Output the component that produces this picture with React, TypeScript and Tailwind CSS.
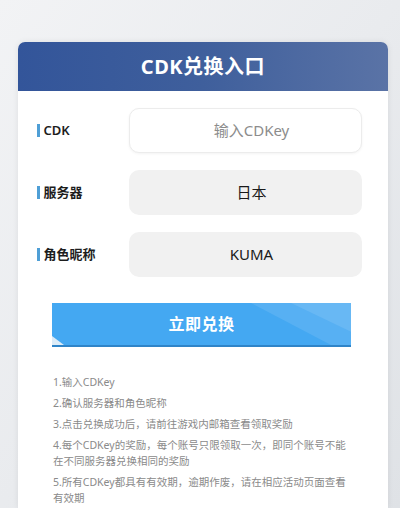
import React from 'react';

const FONT = { fontFamily: '"Noto Sans", "Noto Sans CJK SC", sans-serif' };

const fields = [
  { label: 'CDK', value: '输入CDKey', placeholder: true },
  { label: '服务器', value: '日本' },
  { label: '角色昵称', value: 'KUMA' },
];

const tips = [
  '1.输入CDKey',
  '2.确认服务器和角色昵称',
  '3.点击兑换成功后，请前往游戏内邮箱查看领取奖励',
  '4.每个CDKey的奖励，每个账号只限领取一次，即同个账号不能在不同服务器兑换相同的奖励',
  '5.所有CDKey都具有有效期，逾期作废，请在相应活动页面查看有效期',
];

function Field({ label, value, placeholder }: { label: string; value: string; placeholder?: boolean }) {
  return (
    <div className="flex items-center h-[45px]">
      <div className="w-[92px] flex items-center">
        <span className="w-[2.5px] h-[13px] bg-[#4f9fd6] mr-[4px]" />
        <span className="text-[13px] font-semibold text-[#1d1d1d] leading-none">{label}</span>
      </div>
      <div
        className={
          placeholder
            ? 'flex-1 h-full rounded-[10px] bg-white border border-[#ececec] shadow-[0_1px_3px_rgba(0,0,0,0.05)] flex items-center justify-center pl-3 text-[15px] text-[#8c8c8c]'
            : 'flex-1 h-full rounded-[10px] bg-[#f1f1f1] flex items-center justify-center pl-3 text-[15px] text-[#1a1a1a]'
        }
      >
        {value}
      </div>
    </div>
  );
}

export default function App() {
  return (
    <div
      className="w-[400px] h-[508px] overflow-hidden bg-gradient-to-br from-[#f2f3f5] via-[#e9ebee] to-[#dfe2e6] pt-[42px] px-[18px] pr-[12px]"
      style={FONT}
    >
      <div className="w-[370px] h-[466px] bg-white rounded-t-[7px] shadow-[0_0_6px_rgba(0,0,0,0.08)] overflow-hidden">
        {/* Header */}
        <div className="h-[49px] bg-gradient-to-r from-[#33559a] via-[#3f5f9c] to-[#5a73a6] flex items-center justify-center">
          <h1 className="text-[20px] font-bold text-white tracking-[0.5px]">CDK兑换入口</h1>
        </div>

        {/* Form */}
        <div className="pt-[17px] pl-[19px] pr-[26px] flex flex-col gap-[17px]">
          {fields.map((f) => (
            <Field key={f.label} {...f} />
          ))}
        </div>

        {/* Submit */}
        <div className="pl-[34px] pt-[26px]">
          <button className="relative w-[299px] h-[44px] bg-[#44a8f2] border-b-2 border-[#2f84c8] overflow-hidden flex items-center justify-center">
            <svg className="absolute right-0 top-0 h-full w-[130px]" viewBox="0 0 130 44" preserveAspectRatio="none">
              <polygon points="30,0 130,0 130,44 110,44" fill="#ffffff" fillOpacity="0.1" />
              <polygon points="70,0 130,0 130,30" fill="#ffffff" fillOpacity="0.1" />
            </svg>
            <svg className="absolute left-0 bottom-0 w-[12px] h-[9px]" viewBox="0 0 12 9">
              <polygon points="0,0 12,9 0,9" fill="#dcecf8" />
            </svg>
            <span className="relative text-[16px] font-bold text-white tracking-[0.5px]">立即兑换</span>
          </button>
        </div>

        {/* Tips */}
        <div className="pl-[35px] pt-[27px] w-[338px] flex flex-col gap-[5px] text-[10.5px] leading-[16px] text-[#8a8a8a]">
          {tips.map((t) => (
            <p key={t}>{t}</p>
          ))}
        </div>
      </div>
    </div>
  );
}
